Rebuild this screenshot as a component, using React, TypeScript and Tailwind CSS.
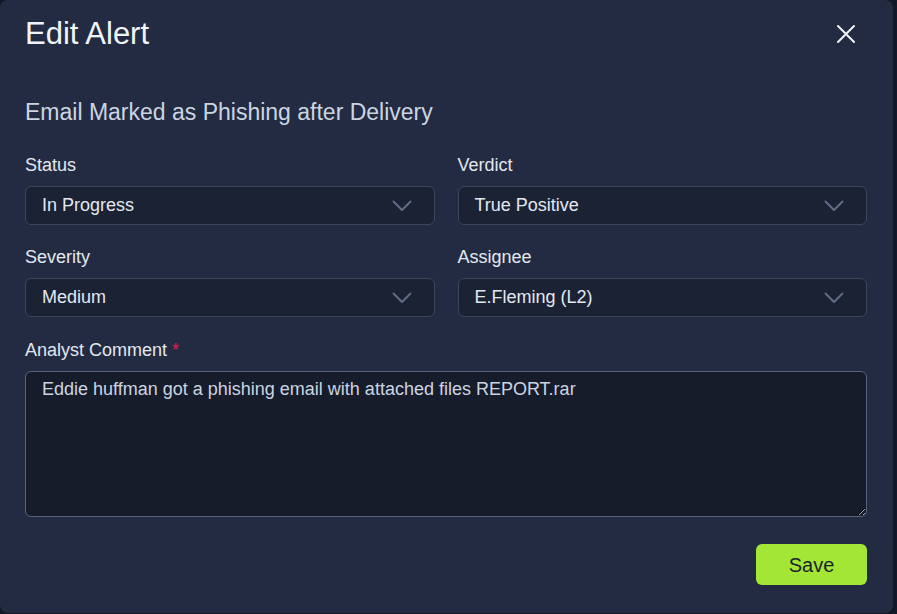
const FIELDS = [
  { label: "Status", value: "In Progress" },
  { label: "Verdict", value: "True Positive" },
  { label: "Severity", value: "Medium" },
  { label: "Assignee", value: "E.Fleming (L2)" },
];

function Chevron() {
  return (
    <svg width="20" height="12" viewBox="0 0 20 12" fill="none" className="shrink-0">
      <path d="M1.5 1.5 L10 10 L18.5 1.5" stroke="#5f6d85" strokeWidth="2" strokeLinecap="round" strokeLinejoin="round" />
    </svg>
  );
}

function SelectBox({ label, value }: { label: string; value: string }) {
  return (
    <div>
      <label className="block text-[18px] leading-[25px] text-[#e2e8f0] mb-2">{label}</label>
      <div className="h-[39px] flex items-center justify-between pl-4 pr-[22px] rounded-md border border-[#3a4659] bg-[#1b2234] text-[18px] text-[#e2e8f0]">
        <span>{value}</span>
        <Chevron />
      </div>
    </div>
  );
}

export default function App() {
  return (
    <div className="min-h-screen bg-[#131826] font-['Liberation_Sans',Arial,sans-serif]">
      <div className="w-[893px] h-[613px] bg-[#222b42] rounded-lg pl-[25px] pr-[26px] pt-[14px]">
        <div className="flex items-center justify-between">
          <h2 className="text-[31px] leading-[40px] text-[#f1f5f9]">Edit Alert</h2>
          <button className="mr-[11px]">
            <svg width="20" height="20" viewBox="0 0 20 20" fill="none">
              <path d="M2 2 L18 18 M18 2 L2 18" stroke="#f1f5f9" strokeWidth="2" strokeLinecap="round" />
            </svg>
          </button>
        </div>

        <p className="mt-[43px] text-[23px] leading-[30px] text-[#cbd5e1]">Email Marked as Phishing after Delivery</p>

        <div className="mt-[26px] grid grid-cols-2 gap-x-[23px] gap-y-[20px]">
          {FIELDS.map((f) => (
            <SelectBox key={f.label} label={f.label} value={f.value} />
          ))}
        </div>

        <label className="mt-[21px] block text-[18px] leading-[25px] text-[#e2e8f0] mb-2">
          Analyst Comment <span className="text-[#e11d48]">*</span>
        </label>
        <textarea
          defaultValue="Eddie huffman got a phishing email with attached files REPORT.rar"
          className="block w-full h-[146px] resize-y rounded-md border border-[#56657f] bg-[#171c2b] px-4 pt-[5px] text-[18px] leading-[24px] text-[#cbd5e1] outline-none"
        />

        <div className="mt-[27px] flex justify-end">
          <button className="w-[111px] h-[41px] rounded-md bg-[#a3e635] text-[20px] text-[#1a1f2e]">Save</button>
        </div>
      </div>
    </div>
  );
}
